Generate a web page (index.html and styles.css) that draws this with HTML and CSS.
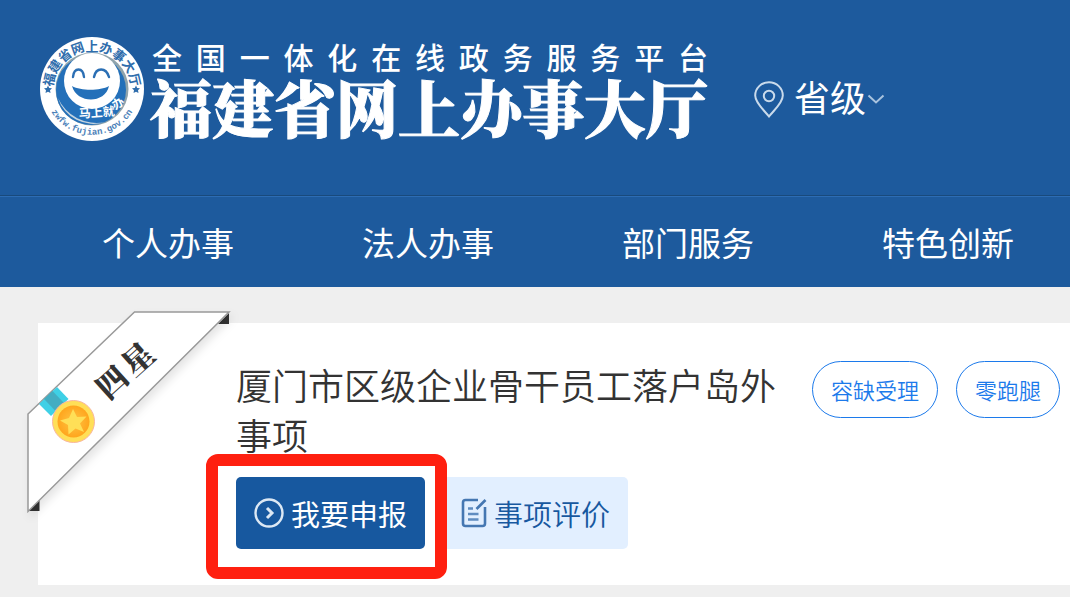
FILE: index.html
```html
<!DOCTYPE html>
<html lang="zh-CN">
<head>
  <meta charset="UTF-8" />
  <meta name="viewport" content="width=device-width, initial-scale=1">
  <title>福建省网上办事大厅</title>
  <link rel="stylesheet" href="styles.css">
</head>
<body>
  <header class="header">
    <a class="brand" href="#">
      <svg class="emblem" viewBox="0 0 106 106" aria-hidden="true">
        <defs>
          <path id="arc-top" d="M14.500 60A39 39 0 1 1 91.500 60" />
          <path id="arc-bottom" d="M6 58A47.500 47.500 0 0 0 100 58" />
        </defs>
        <circle cx="53" cy="53" r="52" fill="#fff" />
        <circle cx="53" cy="53" r="36.500" fill="#8fa3ab" />
        <circle cx="52" cy="54" r="35" fill="#2470b9" />
        <path d="M19 62A37 37 0 0 0 66 86A42 42 0 0 1 19 62Z" fill="#c3d3df" />
        <circle cx="53" cy="45" r="28" fill="#fff" />
        <g fill="none" stroke="#2b6fb4" stroke-width="2.400" stroke-linecap="round">
          <path d="M34 41C35 31 44 31 45 41" />
          <path d="M55 41C57 31 67 31 70 41" />
        </g>
        <path d="M33 50C42 55 61 55 70 50C66 68 38 68 33 50Z" fill="#2470b9" />
        <g fill="#2f6dac">
          <path d="M9 49.500l1.200 2.500 2.800.3-2 2 .5 2.700L9 55.700 6.500 57l.5-2.700-2-2 2.800-.3z" />
          <path d="M97 49.500l1.200 2.500 2.800.3-2 2 .5 2.700-2.500-1.300-2.500 1.300.5-2.700-2-2 2.800-.3z" />
        </g>
        <text class="emblem-name"><textPath href="#arc-top" startOffset="50%">福建省网上办事大厅</textPath></text>
        <text class="emblem-url"><textPath href="#arc-bottom" startOffset="50%">zwfw.fujian.gov.cn</textPath></text>
        <text class="emblem-slogan" transform="translate(40 82) rotate(-4)">马上就</text>
        <text class="emblem-slogan" transform="translate(76 74) rotate(-30)">办</text>
      </svg>
      <span class="brand-text">
        <span class="brand-sub">全国一体化在线政务服务平台</span>
        <span class="brand-title">福建省网上办事大厅</span>
      </span>
    </a>

    <div class="location">
      <svg class="pin" viewBox="0 0 30 37" aria-hidden="true">
        <path d="M15 35.500C10 29 1.200 22 1.200 14.500a13.800 13.300 0 0 1 27.600 0C28.800 22 20 29 15 35.500Z" />
        <circle cx="15" cy="15" r="5.200" />
      </svg>
      <select class="level" aria-label="区域级别">
        <option>省级</option>
        <option>市级</option>
      </select>
      <svg class="chevron" viewBox="0 0 18 12" aria-hidden="true">
        <path d="M1.500 2.500L9 9.500l7.500-7" />
      </svg>
    </div>
  </header>

  <nav class="nav">
    <a href="#">个人办事</a>
    <a href="#">法人办事</a>
    <a href="#">部门服务</a>
    <a href="#">特色创新</a>
  </nav>

  <main class="card">
    <svg class="ribbon" viewBox="0 0 206 206" role="img" aria-label="四星">
      <defs>
        <radialGradient id="coin">
          <stop offset="0" stop-color="#ffc444" />
          <stop offset="1" stop-color="#ffa51d" />
        </radialGradient>
      </defs>
      <path d="M192 14H203V3zM2 201H13.500V189.500z" fill="#333" />
      <path class="ribbon-band" d="M108.500 2H203L2 201.500V104Z" />
      <path d="M31 77L42.500 89L25 106L13 94Z" fill="#3fd0e6" />
      <path d="M26.500 81L38 93L29.500 101L18 89Z" fill="#43adc2" />
      <circle cx="47.500" cy="111.500" r="21" fill="#ffdf57" stroke="#f8b6a0" />
      <circle cx="47.500" cy="111.500" r="16" fill="url(#coin)" />
      <path d="M47 99l4 8 9.500-.5-6.500 7 4 8.500-8.500-3.500-7 6-.5-9.500-8-4.500 9-2.500z" fill="#ffdf57" />
      <text class="ribbon-text" transform="translate(82 91) rotate(-42)">四</text>
      <text class="ribbon-text" transform="translate(108 68) rotate(-42)">星</text>
    </svg>

    <div class="card-top">
      <h1 class="card-title">厦门市区级企业骨干员工落户岛外事项</h1>
      <div class="tags">
        <span class="tag">容缺受理</span>
        <span class="tag">零跑腿</span>
      </div>
    </div>

    <div class="actions">
      <div class="highlight">
        <button class="btn btn-primary" type="button">
          <svg width="30" height="30" viewBox="0 0 30 30" aria-hidden="true">
            <circle cx="15" cy="15" r="13.500" stroke="#dce8f4" stroke-width="2.400" />
            <path d="M13 10l5 5-5 5" stroke="#dce8f4" stroke-width="3" />
          </svg>
          我要申报
        </button>
      </div>
      <button class="btn btn-light" type="button">
        <svg width="26" height="30" viewBox="0 0 26 30" aria-hidden="true">
          <path d="M17 2H4.500A2.500 2.500 0 0 0 2 4.500V25.500A2.500 2.500 0 0 0 4.500 28H21.500A2.500 2.500 0 0 0 24 25.500V9" stroke="#4577b2" stroke-width="2.600" />
          <path d="M15.500 11L24.500 2" stroke="#4577b2" stroke-width="2.600" />
          <path d="M7 10.500H12M7 16H17.500M7 21.500H17.500" stroke="#5f8cc0" stroke-width="2.400" />
        </svg>
        事项评价
      </button>
    </div>
  </main>
</body>
</html>
```

FILE: styles.css
```css
:root {
  --blue: #1d5a9d;
  --btn-blue: #17589f;
  --btn-light: #e2efff;
  --tag-blue: #1c7aeb;
  --page-bg: #efefef;
  --text-dark: #333;
  --mark-red: #ff2010;
}

* {
  box-sizing: border-box;
}

body {
  margin: 0;
  font-family: 'Noto Sans CJK SC', sans-serif;
  background: var(--page-bg);
  color: var(--text-dark);
}

a {
  color: inherit;
  text-decoration: none;
}

.header {
  display: flex;
  align-items: flex-start;
  gap: 46px;
  padding: 36px 39px 53px;
  background: var(--blue);
  color: #fff;
}

.brand {
  display: flex;
  gap: 5px;
}

.emblem {
  width: 106px;
  height: 106px;
}

.emblem-name {
  font-size: 13px;
  font-weight: 700;
  fill: #2f6dac;
  text-anchor: middle;
}

.emblem-url {
  font-family: 'Liberation Mono', monospace;
  font-size: 9px;
  font-weight: 700;
  fill: #4a80b8;
  text-anchor: middle;
}

.emblem-slogan {
  font-size: 12px;
  font-weight: 700;
  fill: #fff;
}

.brand-text {
  display: flex;
  flex-direction: column;
}

.brand-sub {
  padding-left: 2px;
  font-size: 30px;
  font-weight: 500;
  line-height: 40px;
  text-align: justify;
  text-align-last: justify;
}

.brand-title {
  font-family: 'Noto Serif CJK SC', 'Noto Sans CJK SC', serif;
  font-size: 62px;
  font-weight: 900;
  line-height: 62px;
  -webkit-text-stroke: 1px #fff;
}

.location {
  display: flex;
  align-items: center;
  padding-top: 36px;
}

.pin {
  width: 30px;
  height: 37px;
  margin-right: 10px;
  fill: none;
  stroke: #c9daeb;
  stroke-width: 2;
}

.level {
  appearance: none;
  padding: 0 0 6px;
  border: 0;
  background: none;
  color: #fff;
  font-family: inherit;
  font-size: 36px;
  line-height: 48px;
  cursor: pointer;
}

.level option {
  color: var(--text-dark);
}

.chevron {
  width: 18px;
  height: 12px;
  fill: none;
  stroke: #a9c3de;
  stroke-width: 2;
}

.nav {
  display: flex;
  gap: 128px;
  padding: 21px 0 20px 102px;
  border-top: 1px solid #194a7c;
  box-shadow: inset 0 1px #2c6cb4;
  background: var(--blue);
  color: #fff;
  font-size: 33px;
  line-height: 50px;
  white-space: nowrap;
}

.card {
  position: relative;
  margin: 36px 0 12px 38px;
  padding: 36px 10px 36px 198px;
  background: #fff;
}

/* corner ribbon hangs over the card edge */
.ribbon {
  position: absolute;
  top: -13px;
  left: -12px;
  width: 206px;
  height: 206px;
  overflow: visible;
}

.ribbon-band {
  fill: #fff;
  stroke: #999;
  stroke-width: 1.5;
  filter: drop-shadow(3px 5px 4px rgba(0, 0, 0, 0.1));
}

.ribbon-text {
  font-family: 'Noto Serif CJK SC', 'Noto Sans CJK SC', serif;
  font-size: 31px;
  font-weight: 900;
  fill: #333;
}

.card-top {
  display: flex;
  align-items: flex-start;
  gap: 32px;
}

.card-title {
  flex: 1;
  margin: 0;
  font-size: 36px;
  font-weight: 350;
  line-height: 50px;
}

.tags {
  display: flex;
  gap: 18px;
  padding-top: 2px;
}

.tag {
  padding: 0 18px;
  border: 1px solid var(--tag-blue);
  border-radius: 29px;
  color: var(--tag-blue);
  font-size: 22px;
  font-weight: 350;
  line-height: 55px;
  white-space: nowrap;
}

.actions {
  display: flex;
  gap: 18px;
  margin-top: 18px;
}

.btn {
  display: flex;
  align-items: center;
  gap: 7px;
  height: 72px;
  padding: 0 18px;
  border: 0;
  border-radius: 5px;
  font-family: inherit;
  font-size: 29px;
  white-space: nowrap;
  cursor: pointer;
}

.btn svg {
  fill: none;
}

.btn-primary {
  background: var(--btn-blue);
  color: #fff;
}

.btn-light {
  background: var(--btn-light);
  color: var(--btn-blue);
  font-weight: 350;
}

.highlight {
  position: relative;
}

.highlight::after {
  content: '';
  position: absolute;
  z-index: 1;
  inset: -23px -22px -30px -30px;
  border: 12px solid var(--mark-red);
  border-radius: 12px;
  pointer-events: none;
}
```
